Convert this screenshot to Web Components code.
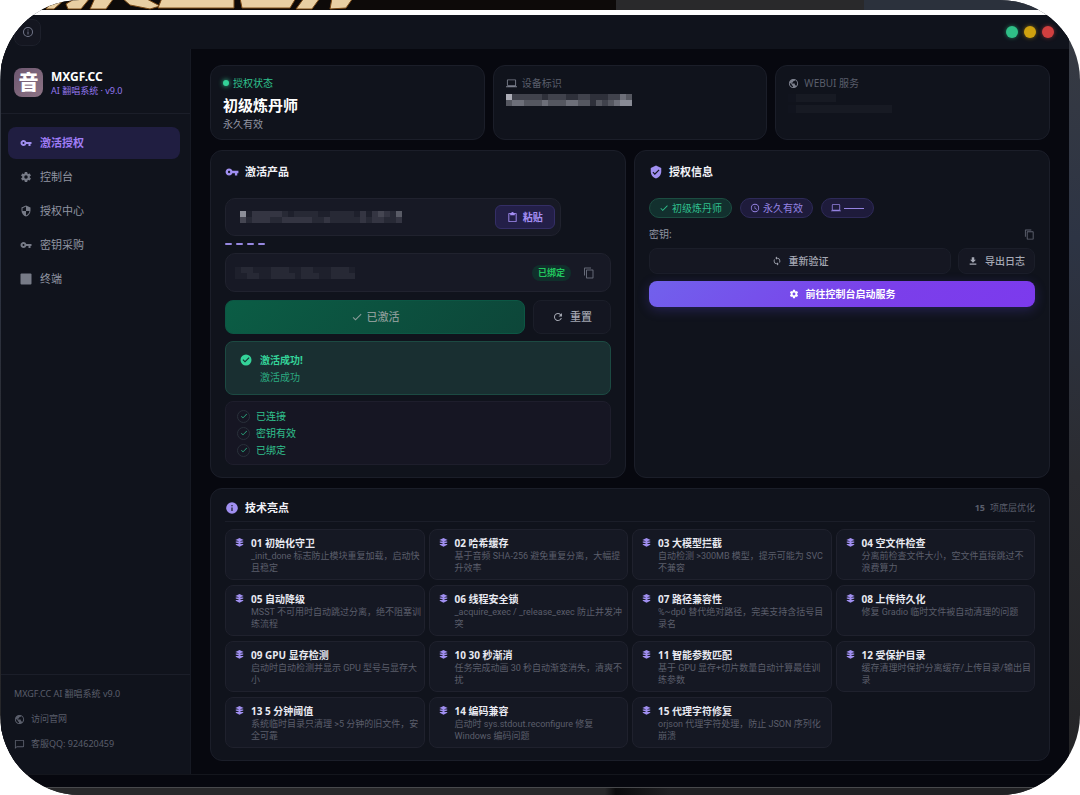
<!DOCTYPE html>
<html lang="zh-CN">
<head>
<meta charset="UTF-8">
<meta name="viewport" content="width=device-width, initial-scale=1">
<title>MXGF.CC AI 翻唱系统</title>
<style>
    body {
        margin: 0;
        background: #fff;
        color: #e9eaf2;
        font-family: "Noto Sans", "Noto Sans CJK SC", sans-serif;
        font-size: 10px;
        line-height: 14px;
        --line: #1b1e29;
        --card: #10131c;
        --field: #171925;
        --muted: #9195a2;
        --dim: #5a5e6b;
        --accent: #a08ff0;
        --green: #34d399;
    }
</style>
</head>
<body>
<app-window>
    <side-bar slot="side"></side-bar>
    <status-card slot="status" tone="live" label="授权状态" heading="初级炼丹师" note="永久有效"></status-card>
    <status-card slot="status" icon="laptop" label="设备标识">
        <pixel-mask rows="955555455544554445576 677666766677664656788"></pixel-mask>
    </status-card>
    <status-card slot="status" icon="globe" label="WEBUI 服务">
        <pixel-mask size="8" rows="122222"></pixel-mask>
        <pixel-mask size="8" rows="1222222222222"></pixel-mask>
    </status-card>
    <activate-panel slot="panels"></activate-panel>
    <license-panel slot="panels"></license-panel>
    <feature-panel slot="features"></feature-panel>
</app-window>

<script>
const ICONS = {
    key: '<path d="M12.65 10A5.99 5.99 0 0 0 7 6c-3.31 0-6 2.69-6 6s2.69 6 6 6a5.99 5.99 0 0 0 5.65-4H17v4h4v-4h2v-4H12.65zM7 14c-1.1 0-2-.9-2-2s.9-2 2-2 2 .9 2 2-.9 2-2 2z"/>',
    cog: '<path d="M12 15.5A3.5 3.5 0 0 1 8.5 12 3.5 3.5 0 0 1 12 8.500a3.500 3.500 0 0 1 3.500 3.500 3.500 3.500 0 0 1-3.500 3.500m7.430-2.530c.04-.32.07-.64.07-.97s-.03-.66-.07-1l2.110-1.630c.19-.15.24-.42.12-.64l-2-3.460c-.12-.22-.39-.31-.61-.22l-2.490 1c-.52-.39-1.060-.73-1.690-.98l-.37-2.650A.506.506 0 0 0 14 2h-4c-.25 0-.46.18-.5.42l-.37 2.650c-.63.25-1.170.59-1.690.98l-2.490-1c-.22-.09-.49 0-.61.22l-2 3.460c-.13.22-.07.49.12.64L4.570 11c-.04.34-.07.67-.07 1s.03.65.07.97l-2.110 1.660c-.19.15-.25.42-.12.64l2 3.460c.12.22.39.3.61.22l2.490-1.010c.52.4 1.060.74 1.690.99l.37 2.650c.04.24.25.42.5.42h4c.25 0 .46-.18.5-.42l.37-2.650c.63-.26 1.170-.59 1.690-.99l2.490 1.010c.22.08.49 0 .61-.22l2-3.460c.12-.22.07-.49-.12-.64z"/>',
    shield: '<path d="M12 1 3 5v6c0 5.55 3.84 10.74 9 12 5.16-1.26 9-6.45 9-12V5l-9-4zm0 10.99h7c-.53 4.12-3.28 7.79-7 8.94V12H5V6.3l7-3.11v8.8z"/>',
    verified: '<path d="M12 1 3 5v6c0 5.55 3.84 10.74 9 12 5.16-1.26 9-6.45 9-12V5l-9-4zm-2 16-4-4 1.41-1.41L10 14.17l6.59-6.59L18 9l-8 8z"/>',
    square: '<rect x="1" y="1" width="22" height="22" rx="2"/>',
    globe: '<path d="M12 2C6.48 2 2 6.48 2 12s4.48 10 10 10 10-4.48 10-10S17.52 2 12 2zm-1 17.93c-3.95-.49-7-3.85-7-7.93 0-.62.08-1.21.21-1.79L9 15v1c0 1.1.9 2 2 2v1.93zm6.9-2.54c-.26-.81-1-1.39-1.9-1.39h-1v-3c0-.55-.45-1-1-1H8v-2h2c.55 0 1-.45 1-1V7h2c1.1 0 2-.9 2-2v-.41c2.93 1.19 5 4.06 5 7.41 0 2.08-.8 3.97-2.1 5.39z"/>',
    laptop: '<path d="M20 18c1.100 0 2-.9 2-2V5c0-1.100-.9-2-2-2H4c-1.100 0-2 .9-2 2v11c0 1.100.9 2 2 2H0v2h24v-2h-4zM4 5h16v11H4V5z"/>',
    chat: '<path d="M20 2H4c-1.100 0-2 .9-2 2v18l4-4h14c1.100 0 2-.9 2-2V4c0-1.100-.9-2-2-2zm0 14H6l-2 2V4h16v12z"/>',
    paste: '<path d="M19 2h-4.180C14.400.84 13.300 0 12 0S9.600.84 9.180 2H5c-1.100 0-2 .9-2 2v16c0 1.100.9 2 2 2h14c1.100 0 2-.9 2-2V4c0-1.100-.9-2-2-2zm0 18H5V4h2v3h10V4h2v16z"/>',
    copy: '<path d="M16 1H4c-1.100 0-2 .9-2 2v14h2V3h12V1zm3 4H8c-1.100 0-2 .9-2 2v14c0 1.100.9 2 2 2h11c1.100 0 2-.9 2-2V7c0-1.100-.9-2-2-2zm0 16H8V7h11v14z"/>',
    check: '<path d="M9 16.170 4.830 12l-1.420 1.410L9 19 21 7l-1.410-1.410z"/>',
    done: '<path d="M12 1a11 11 0 1 0 0 22 11 11 0 0 0 0-22zm-2 16-5-5 1.600-1.600 3.400 3.400 7.400-7.400L19 8z"/>',
    refresh: '<path d="M17.650 6.350A8 8 0 1 0 19.730 14h-2.080A6 6 0 1 1 12 6c1.660 0 3.140.69 4.220 1.780L13 11h7V4z"/>',
    sync: '<path d="M12 4V1L8 5l4 4V6c3.310 0 6 2.690 6 6 0 1.010-.25 1.970-.7 2.800l1.460 1.460A7.930 7.930 0 0 0 20 12c0-4.420-3.580-8-8-8zm0 14c-3.310 0-6-2.690-6-6 0-1.010.25-1.970.7-2.800L5.240 7.740A7.930 7.930 0 0 0 4 12c0 4.420 3.580 8 8 8v3l4-4-4-4v3z"/>',
    download: '<path d="M19 9h-4V3H9v6H5l7 7zM4 18v3h16v-3z"/>',
    clock: '<path d="M12 2a10 10 0 1 0 0 20 10 10 0 0 0 0-20zm0 18a8 8 0 1 1 0-16 8 8 0 0 1 0 16zm.5-13H11v6l5.250 3.150.75-1.230-4.500-2.670z"/>',
    info: '<path d="M11 17h2v-6h-2v6zm1-15a10 10 0 1 0 0 20 10 10 0 0 0 0-20zm0 18a8 8 0 1 1 0-16 8 8 0 0 1 0 16zM11 9h2V7h-2v2z"/>',
    infoFill: '<path fill-rule="evenodd" d="M12 2a10 10 0 1 0 0 20 10 10 0 0 0 0-20zm-1 5h2v2h-2zm0 4h2v6h-2z"/>',
    layers: '<path d="M12 0 23 5 12 9 1 5z"/><path d="M2 9h20v3l-10 3L2 12zM2 16h20v2l-10 5-10-5z"/><path d="M10 6h4v14h-4z"/>'
};

function render(el, html) {
    el.attachShadow({ mode: 'open' }).innerHTML = html;
}

class UiIcon extends HTMLElement {
    constructor() {
        super();
        render(this, `
            <style>
                :host { display: block; flex: none; width: 12px; height: 12px; }
                svg { display: block; width: 100%; height: 100%; fill: currentColor; }
            </style>
            <svg viewBox="0 0 24 24" aria-hidden="true"></svg>
        `);
    }

    connectedCallback() {
        this.shadowRoot.querySelector('svg').innerHTML = ICONS[this.getAttribute('name')] || '';
    }
}

// Hides a private value behind coarse blocks. Each digit is the brightness of one block.
class PixelMask extends HTMLElement {
    connectedCallback() {
        const size = Number(this.getAttribute('size')) || 6;
        const rows = this.getAttribute('rows').split(' ');
        const cols = rows[0].length;
        let rects = '';
        rows.forEach((row, y) => {
            [...row].forEach((n, x) => {
                rects += `<rect x="${x * size}" y="${y * size}" width="${size}" height="${size}" fill="#cfd0da" opacity="${n * n * 0.01}"/>`;
            });
        });
        render(this, `
            <style>
                :host { display: block; flex: none; margin: 3px 0; }
                svg { display: block; }
            </style>
            <svg width="${cols * size}" height="${rows.length * size}" shape-rendering="crispEdges" aria-hidden="true">${rects}</svg>
        `);
    }
}

class AppWindow extends HTMLElement {
    constructor() {
        super();
        render(this, `
            <style>
                :host {
                    display: flex;
                    flex-direction: column;
                    min-height: 100vh;
                    box-sizing: border-box;
                    border-radius: 80px;
                    overflow: hidden;
                    background: linear-gradient(#383b42, #2d3444 30%, #2b2c31 60%, #242426);
                }
                .wallpaper {
                    height: 10px;
                    background: linear-gradient(90deg, #0d0a09 57%, #29292b 57%, #29292b 80%, #2b313c 80%);
                }
                .wallpaper svg { display: block; }
                .gap { height: 5px; background: #fff; }
                .frame {
                    flex: 1;
                    display: flex;
                    flex-direction: column;
                    margin: 0 11px 0 1px;
                    padding-bottom: 12px;
                    background: #07080f;
                }
                header {
                    display: flex;
                    align-items: center;
                    justify-content: space-between;
                    height: 34px;
                    padding: 0 15px 0 13px;
                    background: #10131c;
                }
                .about {
                    display: grid;
                    place-items: center;
                    width: 27px;
                    height: 27px;
                    padding: 0;
                    border: 1px solid #1d202b;
                    border-radius: 8px;
                    background: #141620;
                    color: #73778a;
                }
                .lights { display: flex; gap: 6px; }
                .lights button {
                    width: 12px;
                    height: 12px;
                    padding: 0;
                    border: 0;
                    border-radius: 50%;
                    background: currentColor;
                    box-shadow: 0 0 5px -1px currentColor;
                }
                .body {
                    flex: 1;
                    display: grid;
                    grid-template-columns: 190px minmax(0, 1fr);
                    border-bottom: 1px solid #14161d;
                }
                main {
                    display: flex;
                    flex-direction: column;
                    gap: 10px;
                    min-width: 0;
                    padding: 16px 19px 12px;
                }
                .status { display: grid; grid-template-columns: repeat(3, minmax(0, 1fr)); gap: 8px; }
                .panels { display: grid; grid-template-columns: repeat(2, minmax(0, 1fr)); gap: 8px; }
                .dock {
                    height: 7px;
                    border-top: 1px solid #48494c;
                    background: linear-gradient(90deg, #28282a 56%, #0b0b0d 57%, #202023 62%);
                }
            </style>
            <div class="wallpaper">
                <svg width="360" height="10" aria-hidden="true">
                    <g fill="#e8cfa3" stroke="#7b4b17">
                        <path d="M50 4 58 -2 63 1 54 9H46z"/>
                        <path d="M66 4 76 -2H90L81 9H68z"/>
                        <path d="M95 -2H114L106 9H90z"/>
                        <path d="M122 -2H145L160 6 150 9 130 5z"/>
                        <path d="M162 -2H234V8H158z"/>
                        <path d="M240 -2H296L290 8H242z"/>
                        <path d="M304 -2H320L312 9H296z"/>
                        <path d="M332 -2H353L346 8 330 9z"/>
                    </g>
                </svg>
            </div>
            <div class="gap"></div>
            <div class="frame">
                <header>
                    <button class="about" aria-label="关于"><ui-icon name="info"></ui-icon></button>
                    <div class="lights">
                        <button aria-label="最小化" style="color: #2fbf87"></button>
                        <button aria-label="最大化" style="color: #cfa10f"></button>
                        <button aria-label="关闭" style="color: #d13f3f"></button>
                    </div>
                </header>
                <div class="body">
                    <slot name="side"></slot>
                    <main>
                        <div class="status"><slot name="status"></slot></div>
                        <div class="panels"><slot name="panels"></slot></div>
                        <slot name="features"></slot>
                    </main>
                </div>
            </div>
            <div class="dock"></div>
        `);
    }
}

class SideBar extends HTMLElement {
    constructor() {
        super();
        render(this, `
            <style>
                :host {
                    display: flex;
                    flex-direction: column;
                    border-right: 1px solid #161923;
                    background: #10131c;
                }
                .brand {
                    display: flex;
                    align-items: center;
                    gap: 8px;
                    padding: 19px 14px 16px 13px;
                    border-bottom: 1px solid var(--line);
                }
                .logo {
                    display: grid;
                    place-items: center;
                    width: 29px;
                    height: 29px;
                    border-radius: 8px;
                    background: linear-gradient(135deg, #6d5770, #8d7485);
                    color: #fff;
                    font-size: 20px;
                    font-weight: 900;
                    line-height: 28px;
                }
                .name { font-size: 12px; font-weight: 700; line-height: 16px; color: #fff; }
                .version { font-size: 9px; line-height: 12px; color: #9478ee; }
                nav { display: flex; flex-direction: column; gap: 2px; padding: 13px 10px 0 7px; }
                nav a {
                    display: flex;
                    align-items: center;
                    gap: 8px;
                    height: 32px;
                    padding: 0 12px;
                    border-radius: 8px;
                    color: var(--muted);
                    font-size: 11px;
                    text-decoration: none;
                }
                nav ui-icon { color: #777b87; }
                nav a.active { background: #201e41; color: #9f7cf5; font-weight: 700; }
                nav a.active ui-icon { color: var(--accent); }
                footer {
                    display: flex;
                    flex-direction: column;
                    gap: 11px;
                    margin-top: auto;
                    padding: 12px 13px 23px;
                    border-top: 1px solid var(--line);
                    color: var(--dim);
                    font-size: 9px;
                }
                footer a { display: flex; align-items: center; gap: 6px; color: inherit; text-decoration: none; }
                footer ui-icon { width: 11px; height: 11px; }
            </style>
            <div class="brand">
                <div class="logo">音</div>
                <div>
                    <div class="name">MXGF.CC</div>
                    <div class="version">AI 翻唱系统 · v9.0</div>
                </div>
            </div>
            <nav>
                <a class="active" href="#activate" aria-current="page"><ui-icon name="key"></ui-icon>激活授权</a>
                <a href="#console"><ui-icon name="cog"></ui-icon>控制台</a>
                <a href="#license"><ui-icon name="shield"></ui-icon>授权中心</a>
                <a href="#buy"><ui-icon name="key"></ui-icon>密钥采购</a>
                <a href="#terminal"><ui-icon name="square"></ui-icon>终端</a>
            </nav>
            <footer>
                <div>MXGF.CC AI 翻唱系统 v9.0</div>
                <a href="#site"><ui-icon name="globe"></ui-icon>访问官网</a>
                <a href="#qq"><ui-icon name="chat"></ui-icon>客服QQ: 924620459</a>
            </footer>
        `);
    }
}

class StatusCard extends HTMLElement {
    connectedCallback() {
        const live = this.getAttribute('tone') === 'live';
        const heading = this.getAttribute('heading');
        render(this, `
            <style>
                :host {
                    display: block;
                    box-sizing: border-box;
                    min-height: 75px;
                    padding: 9px 13px 8px 12px;
                    border: 1px solid var(--line);
                    border-radius: 12px;
                    background: var(--card);
                }
                .label { display: flex; align-items: center; gap: 5px; line-height: 16px; color: var(--dim); }
                .label.live { gap: 4px; color: #2fc28d; }
                .label ui-icon { width: 11px; height: 11px; color: #7b7f8c; }
                .dot { width: 6px; height: 6px; border-radius: 50%; background: var(--green); box-shadow: 0 0 5px var(--green); }
                h2 { margin: 2px 0 0; font-size: 15px; font-weight: 700; line-height: 24px; color: #fff; }
                .note { color: var(--muted); }
            </style>
            <div class="label ${live ? 'live' : ''}">
                ${live ? '<span class="dot"></span>' : `<ui-icon name="${this.getAttribute('icon')}"></ui-icon>`}
                <span>${this.getAttribute('label')}</span>
            </div>
            ${heading ? `<h2>${heading}</h2><div class="note">${this.getAttribute('note')}</div>` : '<slot></slot>'}
        `);
    }
}

// Shared card frame with an icon title; the body goes in the default slot
class UiPanel extends HTMLElement {
    connectedCallback() {
        render(this, `
            <style>
                :host {
                    display: block;
                    box-sizing: border-box;
                    height: 100%;
                    padding: 12px 14px;
                    border: 1px solid var(--line);
                    border-radius: 12px;
                    background: var(--card);
                }
                .head { display: flex; align-items: center; gap: 6px; }
                ui-icon { width: 14px; height: 14px; color: var(--accent); }
                h3 { flex: 1; margin: 0; font-size: 11px; font-weight: 700; line-height: 18px; color: #f1f2f8; }
                :host([ruled]) { padding-top: 10px; }
                :host([ruled]) .head { padding-bottom: 4px; border-bottom: 1px solid var(--line); }
            </style>
            <div class="head">
                <ui-icon name="${this.getAttribute('icon')}"></ui-icon>
                <h3>${this.getAttribute('heading')}</h3>
                <slot name="extra"></slot>
            </div>
            <slot></slot>
        `);
    }
}

class ActivatePanel extends HTMLElement {
    constructor() {
        super();
        render(this, `
            <style>
                :host { display: block; }
                button { font: inherit; cursor: pointer; }
                .field {
                    display: flex;
                    align-items: center;
                    box-sizing: border-box;
                    height: 38px;
                    padding: 0 5px 0 14px;
                    border: 1px solid #20222e;
                    border-radius: 10px;
                    background: var(--field);
                }
                .key { width: 87%; margin-top: 17px; }
                .device { height: 39px; margin-top: 8px; padding: 0 15px 0 9px; gap: 12px; }
                input { flex: 1; min-width: 0; padding: 0; border: 0; outline: 0; background: none; color: inherit; font: inherit; }
                .paste {
                    display: flex;
                    align-items: center;
                    justify-content: center;
                    gap: 5px;
                    width: 60px;
                    height: 24px;
                    padding: 0;
                    border: 1px solid #342e66;
                    border-radius: 6px;
                    background: #231f48;
                    color: #a58ff5;
                    font-weight: 700;
                }
                .paste ui-icon { width: 11px; height: 11px; }
                .steps { display: flex; gap: 4px; margin-top: 7px; }
                .steps i { width: 7px; height: 2px; border-radius: 1px; background: #9687e0; }
                .badge {
                    padding: 1px 6px;
                    border-radius: 8px;
                    background: #102f2b;
                    color: #22c55e;
                    font-size: 9px;
                    font-weight: 700;
                }
                .copy { padding: 0; border: 0; background: none; color: #656977; }
                .actions { display: flex; gap: 8px; margin-top: 8px; }
                .actions button {
                    display: flex;
                    align-items: center;
                    justify-content: center;
                    gap: 6px;
                    height: 34px;
                    border: 1px solid var(--line);
                    border-radius: 8px;
                    background: #141621;
                    color: #a2a5b0;
                    font-size: 11px;
                    font-weight: 500;
                }
                .actions .active { flex: 1; gap: 4px; border-color: #0c5744; background: linear-gradient(135deg, #0b5d45, #0d4639); color: #8a9b98; }
                .actions .reset { width: 78px; padding: 0; }
                .success {
                    display: flex;
                    gap: 8px;
                    margin-top: 7px;
                    padding: 9px 14px;
                    border: 1px solid #1c4a42;
                    border-radius: 8px;
                    background: #192f31;
                    color: var(--green);
                }
                .success ui-icon { margin-top: 3px; }
                .success b { display: block; line-height: 18px; }
                .success span { display: block; line-height: 16px; color: #2ba980; }
                ul {
                    display: flex;
                    flex-direction: column;
                    gap: 3px;
                    margin: 6px 0 0;
                    padding: 7px 11px;
                    border: 1px solid #1e1e2c;
                    border-radius: 8px;
                    background: #161623;
                    color: #30c08d;
                    list-style: none;
                }
                li { display: flex; align-items: center; gap: 6px; }
                .tick { display: grid; place-items: center; width: 11px; height: 11px; border: 1px solid #29303a; border-radius: 50%; }
                .tick ui-icon { width: 8px; height: 8px; }
            </style>
            <ui-panel icon="key" heading="激活产品">
                <div class="field key">
                    <pixel-mask rows="824444432333322333324245436 534443344444334333334344334"></pixel-mask>
                    <input type="text" aria-label="激活密钥">
                    <button class="paste"><ui-icon name="paste"></ui-icon>粘贴</button>
                </div>
                <div class="steps"><i></i><i></i><i></i><i></i></div>
                <div class="field device">
                    <pixel-mask rows="23322233322332223332 22332233332333223333"></pixel-mask>
                    <input type="text" aria-label="设备标识" readonly>
                    <span class="badge">已绑定</span>
                    <button class="copy" aria-label="复制"><ui-icon name="copy"></ui-icon></button>
                </div>
                <div class="actions">
                    <button class="active"><ui-icon name="check"></ui-icon>已激活</button>
                    <button class="reset"><ui-icon name="refresh"></ui-icon>重置</button>
                </div>
                <div class="success" role="status">
                    <ui-icon name="done"></ui-icon>
                    <div><b>激活成功!</b><span>激活成功</span></div>
                </div>
                <ul>
                    <li><span class="tick"><ui-icon name="check"></ui-icon></span>已连接</li>
                    <li><span class="tick"><ui-icon name="check"></ui-icon></span>密钥有效</li>
                    <li><span class="tick"><ui-icon name="check"></ui-icon></span>已绑定</li>
                </ul>
            </ui-panel>
        `);
    }
}

class LicensePanel extends HTMLElement {
    constructor() {
        super();
        render(this, `
            <style>
                :host { display: block; }
                .chips { display: flex; gap: 8px; margin-top: 17px; }
                .chip {
                    display: flex;
                    align-items: center;
                    gap: 3px;
                    padding: 2px 9px;
                    border: 1px solid #2e2a58;
                    border-radius: 10px;
                    background: #1e1b3b;
                    color: #9583e2;
                }
                .chip.ok { border-color: #1c4d41; background: #12302e; color: #2fbf8c; }
                .chip ui-icon, .row button ui-icon { width: 10px; height: 10px; }
                .dash { width: 20px; height: 1px; background: currentColor; }
                .secret { display: flex; align-items: center; justify-content: space-between; margin-top: 9px; color: var(--muted); }
                button { font: inherit; cursor: pointer; }
                .copy { padding: 0; border: 0; background: none; color: #5f6370; }
                .copy ui-icon { width: 11px; height: 11px; }
                .row { display: flex; gap: 7px; margin-top: 7px; }
                .row button {
                    display: flex;
                    align-items: center;
                    justify-content: center;
                    gap: 7px;
                    height: 26px;
                    padding: 0 9px;
                    border: 1px solid var(--line);
                    border-radius: 8px;
                    background: #151722;
                    color: #a6a9b5;
                    font-weight: 500;
                }
                .row .wide { flex: 1; }
                .row .primary {
                    border: 0;
                    background: linear-gradient(135deg, #7161ec, #7b3fea 60%, #7c3aed);
                    box-shadow: 0 3px 12px rgba(99, 80, 241, 0.25);
                    color: #fff;
                    font-weight: 700;
                }
            </style>
            <ui-panel icon="verified" heading="授权信息">
                <div class="chips">
                    <span class="chip ok"><ui-icon name="check"></ui-icon>初级炼丹师</span>
                    <span class="chip"><ui-icon name="clock"></ui-icon>永久有效</span>
                    <span class="chip"><ui-icon name="laptop"></ui-icon><i class="dash"></i></span>
                </div>
                <div class="secret">
                    <span>密钥:</span>
                    <button class="copy" aria-label="复制密钥"><ui-icon name="copy"></ui-icon></button>
                </div>
                <div class="row">
                    <button class="wide"><ui-icon name="sync"></ui-icon>重新验证</button>
                    <button><ui-icon name="download"></ui-icon>导出日志</button>
                </div>
                <div class="row">
                    <button class="wide primary"><ui-icon name="cog"></ui-icon>前往控制台启动服务</button>
                </div>
            </ui-panel>
        `);
    }
}

class FeatureItem extends HTMLElement {
    constructor() {
        super();
        render(this, `
            <style>
                :host {
                    display: flex;
                    gap: 7px;
                    box-sizing: border-box;
                    min-height: 51px;
                    padding: 6px 2px 5px 9px;
                    border: 1px solid #1f212d;
                    border-radius: 8px;
                    background: #151823;
                }
                ui-icon { width: 9px; height: 9px; margin-top: 2px; color: var(--accent); }
                b { display: block; line-height: 14px; color: #e8e9f1; }
                span {
                    display: block;
                    color: #5b5e6b;
                    font-family: Roboto, "Noto Sans CJK SC", sans-serif;
                    font-size: 9px;
                    line-height: 12px;
                }
            </style>
            <ui-icon name="layers"></ui-icon>
            <div><b><slot name="title"></slot></b><span><slot></slot></span></div>
        `);
    }
}

const FEATURES = [
    ['01 初始化守卫', '_init_done 标志防止模块重复加载，启动快且稳定'],
    ['02 哈希缓存', '基于音频 SHA-256 避免重复分离，大幅提升效率'],
    ['03 大模型拦截', '自动检测 >300MB 模型，提示可能为 SVC 不兼容'],
    ['04 空文件检查', '分离前检查文件大小，空文件直接跳过不浪费算力'],
    ['05 自动降级', 'MSST 不可用时自动跳过分离，绝不阻塞训练流程'],
    ['06 线程安全锁', '_acquire_exec / _release_exec 防止并发冲突'],
    ['07 路径兼容性', '%~dp0 替代绝对路径，完美支持含括号目录名'],
    ['08 上传持久化', '修复 Gradio 临时文件被自动清理的问题'],
    ['09 GPU 显存检测', '启动时自动检测并显示 GPU 型号与显存大小'],
    ['10 30 秒渐消', '任务完成动画 30 秒自动渐变消失，清爽不扰'],
    ['11 智能参数匹配', '基于 GPU 显存+切片数量自动计算最佳训练参数'],
    ['12 受保护目录', '缓存清理时保护分离缓存/上传目录/输出目录'],
    ['13 5 分钟阈值', '系统临时目录只清理 >5 分钟的旧文件，安全可靠'],
    ['14 编码兼容', '启动时 sys.stdout.reconfigure 修复 Windows 编码问题'],
    ['15 代理字符修复', 'orjson 代理字符处理，防止 JSON 序列化崩溃']
];

class FeaturePanel extends HTMLElement {
    constructor() {
        super();
        render(this, `
            <style>
                :host { display: block; }
                .count { display: flex; gap: 5px; color: var(--dim); font-size: 9px; }
                .grid { display: grid; grid-template-columns: repeat(4, minmax(0, 1fr)); gap: 5px 4px; margin-top: 7px; }
            </style>
            <ui-panel ruled icon="infoFill" heading="技术亮点">
                <span class="count" slot="extra"><b>15</b><span>项底层优化</span></span>
                <div class="grid">
                    ${FEATURES.map(([title, text]) => `
                        <feature-item><span slot="title">${title}</span>${text.replace('>', '&gt;')}</feature-item>
                    `).join('')}
                </div>
            </ui-panel>
        `);
    }
}

customElements.define('ui-icon', UiIcon);
customElements.define('pixel-mask', PixelMask);
customElements.define('ui-panel', UiPanel);
customElements.define('feature-item', FeatureItem);
customElements.define('status-card', StatusCard);
customElements.define('side-bar', SideBar);
customElements.define('activate-panel', ActivatePanel);
customElements.define('license-panel', LicensePanel);
customElements.define('feature-panel', FeaturePanel);
customElements.define('app-window', AppWindow);
</script>
</body>
</html>
